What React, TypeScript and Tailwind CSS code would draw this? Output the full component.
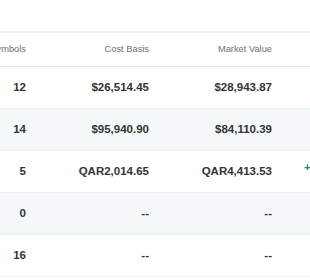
import React from 'react'

type Row = {
  symbols: number
  cost: string
  market: string
  gain?: string
}

const rows: Row[] = [
  { symbols: 12, cost: '$26,514.45', market: '$28,943.87' },
  { symbols: 14, cost: '$95,940.90', market: '$84,110.39' },
  { symbols: 5, cost: 'QAR2,014.65', market: 'QAR4,413.53', gain: '+QAR2,398.88' },
  { symbols: 0, cost: '--', market: '--' },
  { symbols: 16, cost: '--', market: '--' }
]

export default function App() {
  return (
    <div className="w-[310px] h-[280px] overflow-hidden bg-white font-['Liberation_Sans',Arial,sans-serif]">
      <div className="h-[31px]" />
      <div className="w-[560px] -ml-[62px] border-t-2 border-[#eeeeee]">
        <div className="flex h-[34px] items-center border-b border-[#e8e8e8] text-[9.3px] text-[#6f6f6f]">
          <div className="w-[88px] shrink-0 text-right">Symbols</div>
          <div className="w-[123px] shrink-0 text-right">Cost Basis</div>
          <div className="w-[123px] shrink-0 text-right">Market Value</div>
          <div className="flex-1" />
        </div>
        {rows.map((r, i) => (
          <div
            key={i}
            className={`flex h-[42px] items-center border-b border-[#eef1f2] text-[11.5px] font-bold text-[#343434] ${
              i % 2 === 1 ? 'bg-[#f4f8f9]' : 'bg-white'
            }`}
          >
            <div className="w-[88px] shrink-0 text-right">{r.symbols}</div>
            <div className="w-[123px] shrink-0 text-right">{r.cost}</div>
            <div className="w-[123px] shrink-0 text-right">{r.market}</div>
            <div className="flex-1 self-start pl-[32px] pt-[8px] text-[#2a8c5c] whitespace-nowrap">
              {r.gain ?? ''}
            </div>
          </div>
        ))}
      </div>
    </div>
  )
}
